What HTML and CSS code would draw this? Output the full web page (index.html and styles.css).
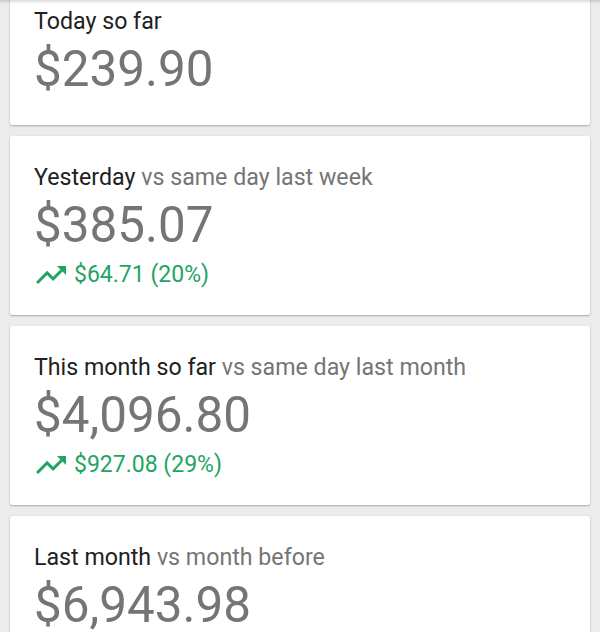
FILE: index.html
```html
<!DOCTYPE html>
<html>
<head>
<meta charset="utf-8">
<link rel="stylesheet" href="styles.css">
</head>
<body>
<div class="topshadow"></div>
<main class="list">
  <section class="card card-first">
    <div class="title">Today so far</div>
    <div class="amount">$239.90</div>
  </section>
  <section class="card">
    <div class="title">Yesterday <span class="muted">vs same day last week</span></div>
    <div class="amount">$385.07</div>
    <div class="change">
      <svg class="trend" viewBox="0 0 24 24" width="36" height="36"><path fill="currentColor" d="M16 6l2.29 2.29-4.88 4.88-4-4L2 16.59 3.41 18l6-6 4 4 6.3-6.29L22 12V6z"/></svg>
      <span>$64.71 (20%)</span>
    </div>
  </section>
  <section class="card">
    <div class="title">This month so far <span class="muted">vs same day last month</span></div>
    <div class="amount">$4,096.80</div>
    <div class="change">
      <svg class="trend" viewBox="0 0 24 24" width="36" height="36"><path fill="currentColor" d="M16 6l2.29 2.29-4.88 4.88-4-4L2 16.59 3.41 18l6-6 4 4 6.3-6.29L22 12V6z"/></svg>
      <span>$927.08 (29%)</span>
    </div>
  </section>
  <section class="card">
    <div class="title">Last month <span class="muted">vs month before</span></div>
    <div class="amount">$6,943.98</div>
  </section>
</main>
</body>
</html>
```
FILE: styles.css
```css
html, body {
  margin: 0;
  padding: 0;
  background: #ececec;
  font-family: Roboto, "Liberation Sans", sans-serif;
  overflow: hidden;
}
.topshadow {
  position: fixed;
  top: 0;
  left: 0;
  right: 0;
  height: 4px;
  background: linear-gradient(rgba(0,0,0,0.14), rgba(0,0,0,0));
  z-index: 2;
}
.list {
  display: flex;
  flex-direction: column;
  gap: 11px;
  padding: 0 10px;
  margin-top: -20px;
}
.card {
  background: #fff;
  border-radius: 2px;
  box-shadow: 0 1px 2px rgba(0,0,0,0.28), 0 0 1px rgba(0,0,0,0.12);
  padding: 26px 24px 22px;
}
.card-first {
  padding-bottom: 28px;
}
.title {
  font-size: 23.2px;
  line-height: 30px;
  color: #212121;
}
.muted {
  color: #757575;
}
.amount {
  font-size: 49.4px;
  line-height: 56px;
  color: #757575;
  margin-top: 5px;
}
.change {
  display: flex;
  align-items: center;
  gap: 5px;
  color: #1fa463;
  font-size: 23px;
  line-height: 36px;
  margin-top: 4px;
  margin-left: -1px;
}
.trend {
  display: block;
  flex: none;
}
```
